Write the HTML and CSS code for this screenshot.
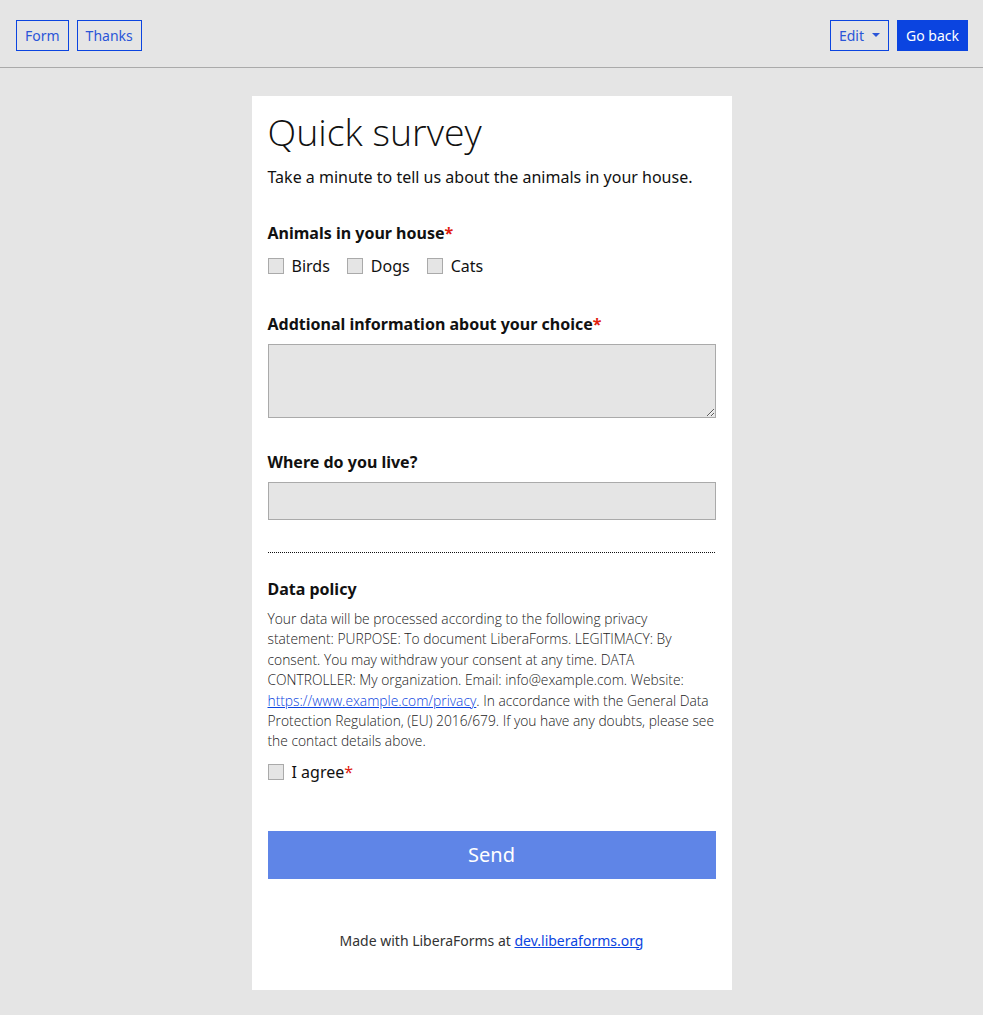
FILE: index.html
```html
<!DOCTYPE html>
<html lang="en">
<head>
  <meta charset="UTF-8">
  <title>Quick survey</title>
  <link rel="stylesheet" href="styles.css">
</head>
<body>

  <nav class="topbar">
    <div class="nav-group">
      <a class="btn btn-outline" href="#">Form</a>
      <a class="btn btn-outline" href="#">Thanks</a>
    </div>
    <div class="nav-group">
      <a class="btn btn-outline" href="#">Edit <span class="caret"></span></a>
      <a class="btn btn-primary" href="#">Go back</a>
    </div>
  </nav>

  <main class="card">
    <h1>Quick survey</h1>
    <p class="intro">Take a minute to tell us about the animals in your house.</p>

    <div class="field">
      <div class="label">Animals in your house<span class="req">*</span></div>
      <div class="checks">
        <label class="check"><span class="box"></span>Birds</label>
        <label class="check"><span class="box"></span>Dogs</label>
        <label class="check"><span class="box"></span>Cats</label>
      </div>
    </div>

    <div class="field field-wide">
      <div class="label">Addtional information about your choice<span class="req">*</span></div>
      <textarea class="textarea"></textarea>
    </div>

    <div class="field">
      <div class="label">Where do you live?</div>
      <input type="text" class="input">
    </div>

    <hr class="dotted">

    <div class="policy">
      <div class="label">Data policy</div>
      <p class="policy-text">Your data will be processed according to the following privacy statement: PURPOSE: To document LiberaForms. LEGITIMACY: By consent. You may withdraw your consent at any time. DATA CONTROLLER: My organization. Email: info@example.com. Website: <a href="#">https://www.example.com/privacy</a>. In accordance with the General Data Protection Regulation, (EU) 2016/679. If you have any doubts, please see the contact details above.</p>
      <label class="check agree"><span class="box"></span>I agree<span class="req">*</span></label>
    </div>

    <button class="send">Send</button>

    <p class="footer">Made with LiberaForms at <a href="#">dev.liberaforms.org</a></p>
  </main>

</body>
</html>
```

FILE: styles.css
```css
/* Base */
* { box-sizing: border-box; margin: 0; padding: 0; }
body {
  font-family: 'Noto Sans', 'Open Sans', sans-serif;
  background: #e5e5e5;
  color: #111;
  font-size: 16px;
}
a { color: #0b44e0; }

/* Top bar */
.topbar {
  display: flex;
  justify-content: space-between;
  align-items: center;
  height: 68px;
  padding: 0 15px 0 16px;
  border-bottom: 1px solid #aaa;
}
.nav-group {
  display: flex;
  gap: 8px;
  margin-top: 3px;
}
.btn {
  display: inline-flex;
  align-items: center;
  height: 31px;
  padding: 0 8px;
  font-size: 14px;
  text-decoration: none;
  border: 1px solid #0b44e0;
}
.btn-outline { color: #2b55d8; }
.btn-primary {
  background: #0b44e0;
  color: #fff;
}
.caret {
  display: inline-block;
  margin-left: 8px;
  border-left: 4px solid transparent;
  border-right: 4px solid transparent;
  border-top: 4px solid #2b55d8;
}

/* Card */
.card {
  width: 480px;
  margin: 28px auto 24px;
  background: #fff;
  padding: 12px 16px 39px;
}
h1 {
  font-family: 'Open Sans', 'Noto Sans', sans-serif;
  font-size: 37.5px;
  font-weight: 300;
  line-height: 48px;
  color: #111;
}
.intro {
  margin-top: 9px;
  line-height: 24px;
}

.field { margin-top: 32px; }
.field-wide { margin-top: 34px; }
.label {
  font-weight: 700;
  line-height: 24px;
}
.req { color: #e0200f; }

.checks {
  display: flex;
  gap: 17px;
  margin-top: 9px;
}
.check {
  display: flex;
  align-items: center;
  line-height: 24px;
}
.box {
  width: 16px;
  height: 16px;
  margin-right: 8px;
  background: #e5e5e5;
  border: 1px solid #aaa;
}

.textarea, .input {
  display: block;
  width: 100%;
  margin-top: 8px;
  background: #e5e5e5;
  border: 1px solid #aaa;
  font: inherit;
}
.textarea { height: 74px; resize: vertical; }
.input { height: 38px; }

.dotted {
  border: none;
  border-top: 1px dotted #111;
  margin-top: 32px;
  width: 447px;
}

.policy { margin-top: 24px; }
.policy-text {
  margin-top: 8px;
  font-family: 'Open Sans', 'Noto Sans', sans-serif;
  font-size: 13.8px;
  font-weight: 300;
  line-height: 20.4px;
  color: #222;
}
.agree { margin-top: 8px; }

.send {
  display: block;
  width: 100%;
  height: 48px;
  margin-top: 47px;
  background: #5f85e7;
  color: #fff;
  border: none;
  font: inherit;
  font-size: 20px;
}

.footer {
  margin-top: 52px;
  text-align: center;
  font-size: 14px;
  color: #333;
  line-height: 20px;
}
```
